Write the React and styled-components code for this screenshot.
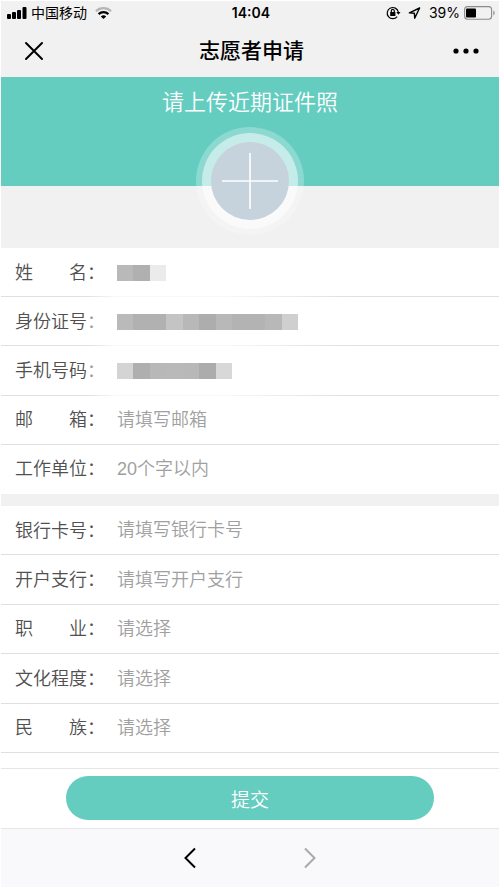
import React, { useState } from 'react';
import styled, { createGlobalStyle } from 'styled-components';

const GlobalStyle = createGlobalStyle`
  *, *::before, *::after {
    box-sizing: border-box;
  }

  body {
    margin: 0;
    background: #fff;
    color: #000;
    font-family: 'Liberation Sans', 'Noto Sans CJK SC', sans-serif;
  }

  button, input, select, output {
    font-family: inherit;
  }
`;

const Page = styled.div`
  min-height: 100vh;
  display: flex;
  flex-direction: column;
  border: 1px solid #fff;
  background: #f1f1f1;
`;

const StatusBar = styled.div`
  display: grid;
  grid-template-columns: 1fr auto 1fr;
  align-items: center;
  height: 24px;
  padding: 0 4px 0 6px;
  font-family: Inter, 'Noto Sans CJK SC', sans-serif;
  font-size: 14px;
  line-height: 20px;
`;

const StatusSide = styled.div`
  display: flex;
  align-items: center;
  justify-content: ${({ $end }) => ($end ? 'flex-end' : 'flex-start')};
  gap: 4px;
`;

const Clock = styled.time`
  font-weight: 600;
`;

const Carrier = styled.span`
  margin-right: 4px;
`;

const NavBar = styled.header`
  display: grid;
  grid-template-columns: 1fr auto 1fr;
  align-items: center;
  height: 52px;
  padding: 0 20px 0 23px;
`;

const Title = styled.h1`
  margin: 0;
  font-size: 21px;
  font-weight: 500;
  line-height: 28px;
`;

const IconButton = styled.button`
  display: flex;
  padding: 0;
  border: 0;
  background: none;
  justify-self: ${({ $end }) => ($end ? 'end' : 'start')};
  cursor: pointer;
`;

const Upload = styled.section`
  display: flex;
  flex-direction: column;
  align-items: center;
  height: 171px;
  padding-top: 10px;
  background: linear-gradient(#64cdc0 109px, #f1f1f1 109px);
`;

const UploadTitle = styled.h2`
  margin: 0 0 8px;
  color: #fff;
  font-size: 22px;
  font-weight: 350;
  line-height: 32px;
`;

const UploadButton = styled.button`
  width: 108px;
  height: 108px;
  padding: 6px;
  border: 0;
  border-radius: 50%;
  background: rgba(255, 255, 255, 0.25);
  cursor: pointer;
`;

const UploadRing = styled.span`
  display: flex;
  align-items: center;
  justify-content: center;
  height: 100%;
  border-radius: 50%;
  background: rgba(255, 255, 255, 0.5);
`;

const UploadCore = styled.span`
  display: flex;
  align-items: center;
  justify-content: center;
  width: 78px;
  height: 78px;
  border-radius: 50%;
  background: #c6d2dc;
`;

const Form = styled.form`
  flex: 1;
  display: flex;
  flex-direction: column;
`;

const Group = styled.div`
  display: grid;
  grid-auto-rows: 1fr;
  min-height: ${({ $last }) => ($last ? '247px' : '246px')};
  margin-bottom: ${({ $last }) => ($last ? '0' : '12px')};
  background: #fff;
`;

const lineColors = {
  solid: '#dfdfdf, #dfdfdf',
  faded: '90deg, #dfdfdf 85px, #f8f8f8 115px, #f8f8f8 220px, #dfdfdf 350px',
  none: '#fff, #fff',
};

const Row = styled.div`
  display: flex;
  align-items: center;
  padding: 0 14px;
  background: linear-gradient(${({ $line }) => lineColors[$line]}) bottom / 100% 1px no-repeat;
`;

const Label = styled.label`
  display: flex;
  width: 102px;
  color: #505050;
  font-size: 18px;
  font-weight: 350;
  line-height: 26px;
`;

const LabelText = styled.span`
  width: 72px;
  text-align: justify;
  text-align-last: justify;
`;

const Colon = styled.span`
  color: ${({ $masked }) => ($masked ? '#999' : 'inherit')};
`;

const Field = styled.input`
  flex: 1;
  min-width: 0;
  height: 32px;
  padding: 0;
  border: 0;
  outline: 0;
  background: none;
  color: #505050;
  font-size: 18px;
  font-weight: 350;

  &::placeholder {
    color: #a0a0a0;
    opacity: 1;
  }
`;

const Picker = styled.select`
  flex: 1;
  min-width: 0;
  height: 32px;
  padding: 0;
  border: 0;
  outline: 0;
  appearance: none;
  background: none;
  color: #a0a0a0;
  font-size: 18px;
  font-weight: 350;
`;

const Mosaic = styled.output`
  display: flex;
  width: ${({ $width }) => $width}px;
  height: 16px;
`;

const Tile = styled.span`
  flex: 1;
  background: ${({ $tone }) => $tone};
`;

const Rest = styled.div`
  flex: 1;
  min-height: 15px;
  background: #fff;
`;

const SubmitBar = styled.div`
  display: flex;
  justify-content: center;
  padding: 7px 0 8px;
  border-top: 1px solid #e6e6e6;
  background: #fff;
`;

const SubmitButton = styled.button`
  width: 74%;
  height: 44px;
  border: 0;
  border-radius: 22px;
  background: #64cdc0;
  color: #fff;
  font-size: 19px;
  font-weight: 350;
  cursor: pointer;
`;

const BottomNav = styled.nav`
  display: flex;
  align-items: center;
  justify-content: center;
  gap: 106px;
  height: 59px;
  border-top: 1px solid #e6e6e6;
  background: #f9f9fb;
`;

const basicFields = [
  { id: 'name', label: '姓名', line: 'faded', width: 49, tiles: ['#b9b9b9', '#b0b0b0', '#ebebeb'] },
  {
    id: 'idCard',
    label: '身份证号',
    line: 'faded',
    width: 181,
    tiles: ['#bababa', '#b1b1b1', '#b1b1b1', '#c4c4c4', '#b8b8b8', '#adadad', '#b8b8b8', '#b3b3b3', '#b3b3b3', '#b8b8b8', '#cfcfcf'],
  },
  {
    id: 'phone',
    label: '手机号码',
    line: 'faded',
    width: 115,
    tiles: ['#d4d4d4', '#afafaf', '#b8b8b8', '#b9b9b9', '#b8b8b8', '#acacac', '#d8d8d8'],
  },
  { id: 'email', label: '邮箱', placeholder: '请填写邮箱' },
  { id: 'company', label: '工作单位', placeholder: '20个字以内', line: 'none' },
];

const extraFields = [
  { id: 'bankCard', label: '银行卡号', placeholder: '请填写银行卡号' },
  { id: 'bankBranch', label: '开户支行', placeholder: '请填写开户支行' },
  { id: 'job', label: '职业', select: true },
  { id: 'education', label: '文化程度', select: true },
  { id: 'nation', label: '民族', select: true },
];

const FormRow = ({ field, value, onChange }) => (
  <Row $line={field.line || 'solid'}>
    <Label htmlFor={field.id}>
      <LabelText>{field.label}</LabelText>
      <Colon $masked={field.width > 100}>：</Colon>
    </Label>
    {field.tiles && (
      <Mosaic id={field.id} $width={field.width}>
        {field.tiles.map((tone, i) => <Tile key={i} $tone={tone} />)}
      </Mosaic>
    )}
    {field.select && (
      <Picker id={field.id} name={field.id} value={value} onChange={onChange}>
        <option value="">请选择</option>
      </Picker>
    )}
    {field.placeholder && (
      <Field
        id={field.id}
        name={field.id}
        value={value}
        onChange={onChange}
        placeholder={field.placeholder}
      />
    )}
  </Row>
);

const App = () => {
  const [form, setForm] = useState({});

  const onChange = (e) => setForm({ ...form, [e.target.name]: e.target.value });

  const renderRow = (field) => (
    <FormRow key={field.id} field={field} value={form[field.id] || ''} onChange={onChange} />
  );

  return (
    <Page>
      <GlobalStyle />
      <StatusBar>
        <StatusSide>
          <svg width="20" height="12" viewBox="0 0 20 12">
            <rect x="0" y="7" width="4" height="5" rx="1" />
            <rect x="5" y="5" width="4" height="7" rx="1" />
            <rect x="10" y="3" width="4" height="9" rx="1" />
            <rect x="15.5" y="0" width="4" height="12" rx="1" />
          </svg>
          <Carrier>中国移动</Carrier>
          <svg width="17" height="12" viewBox="0 0 17 12" fill="none" strokeWidth="2.2">
            <path d="M.9 4.2a11 11 0 0 1 15.2 0" stroke="#b5b5b5" />
            <path d="M3.6 7.1a7 7 0 0 1 9.8 0" stroke="#000" />
            <path d="M5.800 9.600a4 4 0 0 1 5.400 0L8.500 12z" fill="#000" />
          </svg>
        </StatusSide>
        <Clock>14:04</Clock>
        <StatusSide $end>
          <svg width="15" height="14" viewBox="0 0 15 14" fill="none" stroke="#000" strokeWidth="1.2">
            <path d="M11.2 10.6A5.6 5.6 0 1 1 12.3 6" />
            <path d="M10.3 6h4.2l-2.1 2.8z" fill="#000" stroke="none" />
            <rect x="4.2" y="6" width="5.2" height="4" fill="#000" stroke="none" />
            <path d="M5.3 6V4.9a1.500 1.500 0 0 1 3 0V6" />
          </svg>
          <svg width="20" height="12" viewBox="0 0 20 12" fill="none" stroke="#000" strokeWidth="1.4">
            <path d="M14.600 1L4.400 5.900l5 .4.3 5z" strokeLinejoin="round" />
          </svg>
          <span>39%</span>
          <svg width="31" height="14" viewBox="0 0 31 14">
            <rect x=".6" y=".6" width="27" height="12.6" rx="3" fill="none" stroke="#8c8c8c" strokeWidth="1.1" />
            <rect x="2" y="2.4" width="10" height="9" rx="1" />
            <path d="M29.3 4.500v5c1.800-.8 1.800-4.200 0-5z" fill="#8c8c8c" />
          </svg>
        </StatusSide>
      </StatusBar>

      <NavBar>
        <IconButton type="button" aria-label="关闭">
          <svg width="20" height="20" viewBox="0 0 20 20" stroke="#000" strokeWidth="2" strokeLinecap="round">
            <path d="M2 2l16 16M18 2L2 18" />
          </svg>
        </IconButton>
        <Title>志愿者申请</Title>
        <IconButton $end type="button" aria-label="更多">
          <svg width="26" height="6" viewBox="0 0 26 6">
            <circle cx="3" cy="3" r="2.6" />
            <circle cx="13" cy="3" r="2.6" />
            <circle cx="23" cy="3" r="2.6" />
          </svg>
        </IconButton>
      </NavBar>

      <Upload>
        <UploadTitle>请上传近期证件照</UploadTitle>
        <UploadButton type="button" aria-label="上传证件照">
          <UploadRing>
            <UploadCore>
              <svg width="58" height="58" viewBox="0 0 58 58" stroke="#fff" strokeWidth="1.6">
                <path d="M29 1v56M1 29h56" />
              </svg>
            </UploadCore>
          </UploadRing>
        </UploadButton>
      </Upload>

      <Form onSubmit={(e) => e.preventDefault()}>
        <Group>{basicFields.map(renderRow)}</Group>
        <Group $last>{extraFields.map(renderRow)}</Group>
        <Rest />
        <SubmitBar>
          <SubmitButton>提交</SubmitButton>
        </SubmitBar>
      </Form>

      <BottomNav>
        <IconButton type="button" aria-label="后退">
          <svg width="14" height="22" viewBox="0 0 14 22" fill="none" stroke="#000" strokeWidth="2">
            <path d="M12 1.500L2.500 11l9.500 9.500" />
          </svg>
        </IconButton>
        <IconButton type="button" aria-label="前进">
          <svg width="14" height="22" viewBox="0 0 14 22" fill="none" stroke="#a9a9ab" strokeWidth="2">
            <path d="M2 1.500L11.500 11 2 20.500" />
          </svg>
        </IconButton>
      </BottomNav>
    </Page>
  );
};

export default App;
